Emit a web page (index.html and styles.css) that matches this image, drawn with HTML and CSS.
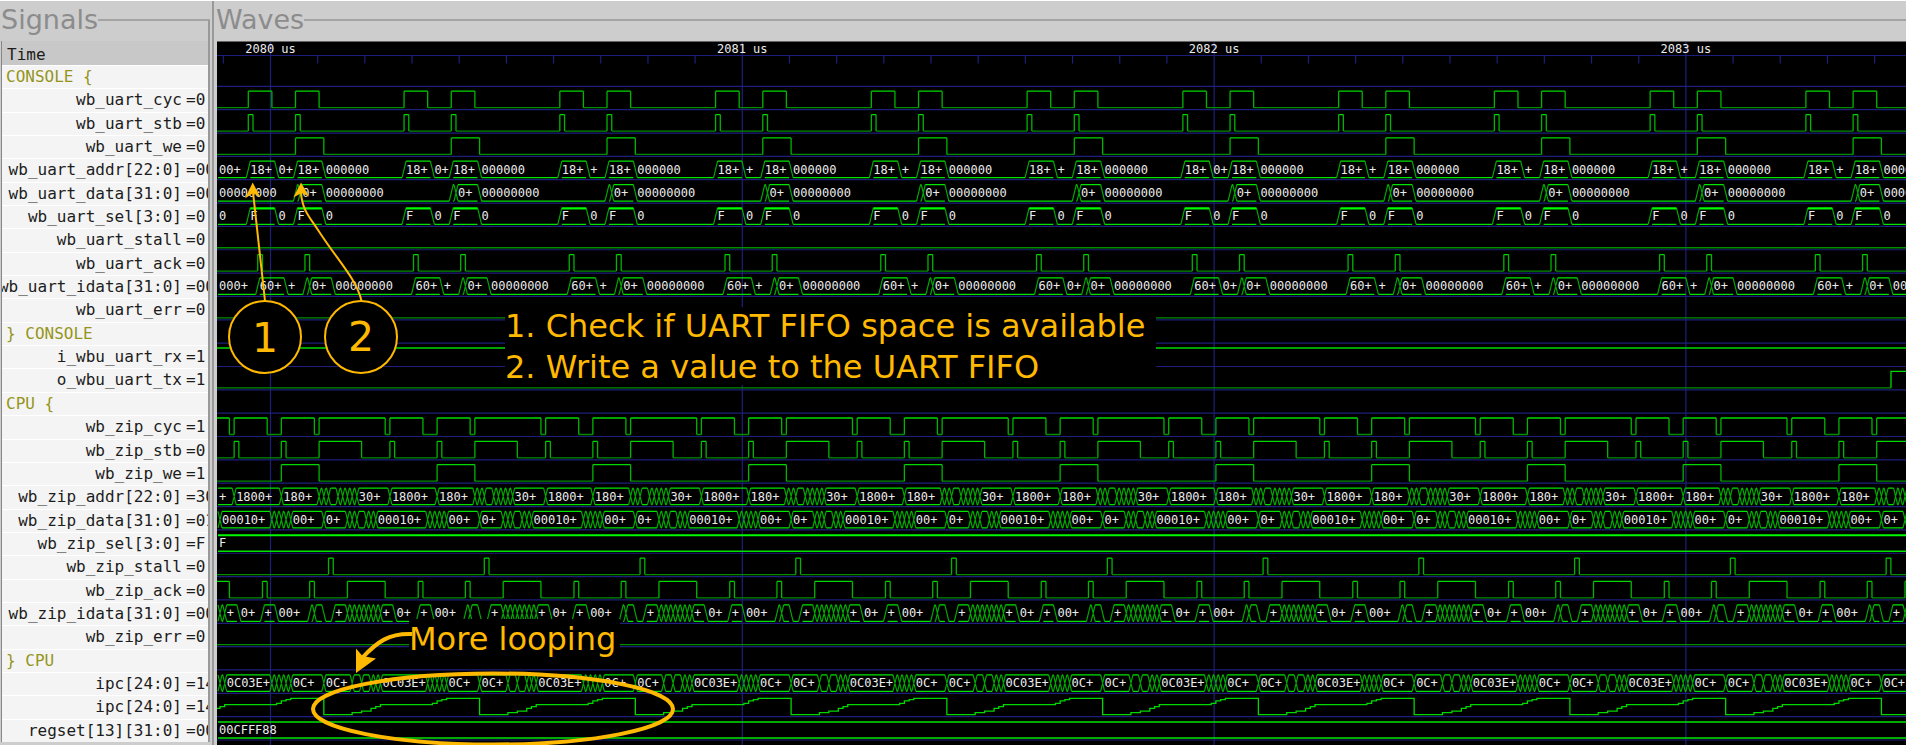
FILE: index.html
```html
<!DOCTYPE html>
<html lang="en">
<head>
<meta charset="utf-8">
<title>Waveform viewer</title>
<link rel="stylesheet" href="styles.css">
</head>
<body>
<main class="viewer">
  <section class="signals">
    <header class="panel-head">
      <h2 class="panel-title">Signals</h2>
      <span class="panel-rule panel-rule-corner"></span>
    </header>
    <div class="signals-body">
      <div class="time-head">Time</div>
      <ul class="signal-list" id="signals"></ul>
    </div>
  </section>
  <div class="divider"></div>
  <section class="waves">
    <header class="panel-head">
      <h2 class="panel-title">Waves</h2>
      <span class="panel-rule"></span>
    </header>
    <div class="canvas">
      <svg class="plot" id="plot" role="img" aria-label="Waveforms of the UART console and the CPU bus"></svg>
    </div>
  </section>
</main>
<script src="waves.js"></script>
</body>
</html>
```

FILE: styles.css
```css
* { box-sizing: border-box; }

body {
  margin: 0;
  background: #fff;
  font-family: "DejaVu Sans", sans-serif;
}

.viewer {
  display: flex;
  min-height: 100vh;
  padding: 1px 1px 3px 0;
}

.signals,
.waves {
  display: flex;
  flex-direction: column;
  background: #cdcdcd;
}

.signals {
  flex: 0 0 212px;
  padding: 0 2px 0 1px;
}

.waves {
  flex: 1;
  min-width: 0;
}

.divider {
  flex: 0 0 4px;
  background: #cdcdcd;
  border-left: 2px solid #999;
}

.panel-head {
  display: flex;
  height: 40px;
}

.panel-title {
  margin: 0;
  font-size: 27px;
  font-weight: 400;
  line-height: 38px;
  color: #8c8c8c;
}

.panel-rule {
  flex: 1;
  margin-top: 18px;
  border-top: 2px solid #a4a4a4;
}

.panel-rule-corner { border-right: 2px solid #999; }

.signals-body {
  flex: 1;
  display: flex;
  flex-direction: column;
  margin-bottom: 3px;
  border-left: 1px solid #888;
  border-right: 2px solid #999;
  font-family: "DejaVu Sans Mono", monospace;
  font-size: 16px;
  color: #1c1c1c;
}

.time-head {
  height: 24px;
  padding: 0 5px;
  line-height: 28px;
  background: #c8c8c8;
}

.signal-list {
  flex: 1;
  display: grid;
  grid-auto-rows: 1fr;
  margin: 0;
  padding: 0;
  list-style: none;
}

.signal {
  display: flex;
  justify-content: flex-end;
  overflow: hidden;
  background: #f4f4f4;
  border-top: 1px solid #fff;
  line-height: 22px;
  white-space: pre;
}

.signal-name {
  flex: 0 0 auto;
  padding-right: 4px;
}

.signal-value {
  flex: 0 0 22px;
  overflow: hidden;
}

.signal-group {
  justify-content: flex-start;
  padding-left: 4px;
  color: #94941c;
}

.canvas {
  flex: 1;
  position: relative;
  margin-left: 1px;
  border-top: 1px solid #666;
  background: #000;
}

.plot {
  position: absolute;
  inset: 0;
  width: 100%;
  height: 100%;
}

.grid { stroke: #1e1e7c; stroke-width: 1.2; fill: none; }
.lo { stroke: #008c00; stroke-width: 1.3; fill: none; }
.hi { stroke: #00d800; stroke-width: 1.3; fill: none; }
.edge { stroke: #00b400; stroke-width: 1.3; fill: none; }
.cross { stroke: #00a800; stroke-width: 1.2; fill: none; }
.rail { stroke: #00e400; stroke-width: 1.3; fill: none; }
.thick { stroke: #00fa00; stroke-width: 2.2; fill: none; }

.val {
  font-family: "DejaVu Sans Mono", monospace;
  font-size: 12px;
  fill: #ececec;
}

.tick-label { text-anchor: middle; }

.note {
  font-family: "DejaVu Sans", sans-serif;
  font-size: 32px;
  fill: #ffb900;
}

.note-number {
  font-size: 41px;
  text-anchor: middle;
}

.note-box { fill: #000; }
.note-circle { fill: #000; stroke: #ffb900; stroke-width: 2; }
.note-line { fill: none; stroke: #ffb900; stroke-width: 2; }
.note-bold { fill: none; stroke: #ffb900; stroke-width: 4; }
.note-head { fill: #ffb900; }
```

FILE: waves.js
```js
// One bus cycle of the loop lasts 33 clocks; every list below is in clocks.
const LOOP = 33;
const CLOCK = 4.72;
const ORIGIN = 31.3;
const MICROSECOND = 471.8;
const FIRST_MARK = 53.5;

const uartLabel = (wide, wideLoops) => k => wideLoops.includes(k) ? wide : '+';

const signals = [
  { group: 'CONSOLE {' },
  { name: 'wb_uart_cyc', value: '0', bits: [[0, 5], [10, 15]] },
  { name: 'wb_uart_stb', value: '0', bits: [[0, 1], [10, 11]] },
  { name: 'wb_uart_we', value: '0', bits: [[10, 16]] },
  { name: 'wb_uart_addr[22:0]', value: '00', first: '00+',
    bus: [[0, '18+', 1], [6, uartLabel('0+', [0, 1, 6]), 0], [10, '18+', 1], [16, '000000', 0]] },
  { name: 'wb_uart_data[31:0]', value: '00',
    bus: [[10, '', 1], [11, '0+', 1], [16, '00000000', 0]] },
  { name: 'wb_uart_sel[3:0]', value: '0',
    bus: [[0, 'F', 2], [6, '0', 0], [10, 'F', 2], [16, '0', 0]] },
  { name: 'wb_uart_stall', value: '0', bits: [] },
  { name: 'wb_uart_ack', value: '0', bits: [[2, 3], [12, 13]] },
  { name: 'wb_uart_idata[31:0]', value: '00', first: '000+',
    bus: [[2, '60+', 1], [8, uartLabel('0+', [5, 6]), 0], [12, '', 1], [13, '0+', 1], [18, '00000000', 0]] },
  { name: 'wb_uart_err', value: '0', bits: [] },
  { group: '} CONSOLE' },
  { name: 'i_wbu_uart_rx', value: '1', level: 1 },
  { name: 'o_wbu_uart_tx', value: '1', rise: 1674 },
  { group: 'CPU {' },
  { name: 'wb_zip_cyc', value: '1', bits: [[-3, 4], [7, 14], [15, 29]] },
  { name: 'wb_zip_stb', value: '0', bits: [[-3, -2], [7, 8], [15, 24]] },
  { name: 'wb_zip_we', value: '1', bits: [[7, 15]] },
  { name: 'wb_zip_addr[22:0]', value: '30', first: '+',
    bus: [[-3, '1800+', 1], [7, '180+', 1], [15, '', 1], [16, '', 1], [17, '', 1], [19, '', 1],
      [20, '', 1], [21, '', 1], [22, '', 1], [23, '30+', 1]] },
  { name: 'wb_zip_data[31:0]', value: '01',
    bus: [[-6, '00010+', 1], [5, '', 1], [6, '', 1], [7, '', 1], [8, '', 1], [9, '00+', 1], [16, '0+', 1],
      [21, '', 1], [22, '', 1], [23, '', 1], [25, '', 1], [26, '', 1]] },
  { name: 'wb_zip_sel[3:0]', value: 'F', constant: 'F', top: 'thick' },
  { name: 'wb_zip_stall', value: '0', bits: [[17, 18]] },
  { name: 'wb_zip_ack', value: '0', bits: [[3, 4], [13, 14], [21, 29]] },
  { name: 'wb_zip_idata[31:0]', value: '00',
    bus: [[-5, '+', 1], [-2, '0+', 0], [3, '+', 1], [6, '00+', 0], [13, '', 1], [14, '', 1], [16, '', 0],
      [18, '+', 1], [21, '', 1], [22, '', 1], [23, '', 1], [24, '', 1], [25, '', 1], [26, '', 1], [27, '', 1]] },
  { name: 'wb_zip_err', value: '0', bits: [] },
  { group: '} CPU' },
  { name: 'ipc[24:0]', value: '14',
    bus: [[-5, '0C03E+', 1], [5, '', 1], [6, '', 1], [7, '', 1], [8, '', 1], [9, '0C+', 1], [16, '0C+', 1],
      [22, '', 1], [24, '', 1], [26, '', 1], [27, '', 1]] },
  { name: 'ipc[24:0]', value: '14',
    steps: [[-11, 2], [-9, 3.5], [-7, 6.3], [-6, 8], [-5, 10], [6, 11.3], [7, 13.8], [8, 15], [9, 16.3], [16, 0]] },
  { name: 'regset[13][31:0]', value: '00', constant: '00CFFF88', top: 'rail' }
];

const list = document.getElementById('signals');
const plot = document.getElementById('plot');

list.innerHTML = signals.map(s => s.group
  ? `<li class="signal signal-group">${s.group}</li>`
  : `<li class="signal"><span class="signal-name">${s.name}</span><span class="signal-value">=${s.value}</span></li>`
).join('');

const at = (k, clock) => ORIGIN + (k * LOOP + clock) * CLOCK;
const path = (cls, d) => d ? `<path class="${cls}" d="${d}"/>` : '';
const text = (cls, x, y, s) => `<text class="${cls}" x="${x}" y="${y}">${s}</text>`;

function drawGrid(width, height, lines) {
  let rows = `M0 13.5H${width}`;
  let out = '';
  for (const y of lines) rows += `M0 ${y}H${width}`;
  for (let i = -1; FIRST_MARK + i * MICROSECOND / 10 < width; i++) {
    const x = FIRST_MARK + i * MICROSECOND / 10;
    rows += i % 10 ? `M${x} 13.5v8` : `M${x} 0V${height}`;
  }
  out += path('grid', rows);
  for (let i = 0; FIRST_MARK + i * MICROSECOND < width; i++) {
    out += text('val tick-label', FIRST_MARK + i * MICROSECOND, 11, `${2080 + i} us`);
  }
  return out;
}

function drawBits(s, hi, lo, width, loops) {
  let x = 0, low = '', high = '', edge = '';
  for (let k = -1; k < loops; k++) {
    for (const [a, b] of s.bits) {
      const x1 = at(k, a), x2 = at(k, b);
      if (x2 < 0) continue;
      if (x1 > x) low += `M${x} ${lo}H${x1}`;
      high += `M${Math.max(x1, 0)} ${hi}H${x2}`;
      edge += `M${x1} ${lo}V${hi}M${x2} ${lo}V${hi}`;
      x = x2;
    }
  }
  if (x < width) low += `M${x} ${lo}H${width}`;
  return path('lo', low) + path('edge', edge) + path('hi', high);
}

function drawBus(s, hi, lo, width, loops) {
  const slant = 2;
  const cells = [];
  for (let k = -1; k < loops; k++) {
    for (const [clock, label, kind] of s.bus) {
      cells.push({ x: at(k, clock), label: typeof label === 'function' ? label(k) : label, kind });
    }
  }
  let rail = '', cross = '', thick = '', labels = '';
  for (let i = 0; i < cells.length - 1; i++) {
    const c = cells[i], end = cells[i + 1].x;
    if (end < 0 || c.x > width) continue;
    const left = Math.max(c.x + slant, 1), right = end - slant;
    rail += `M${left} ${lo}H${right}`;
    if (c.kind === 1) rail += `M${left} ${hi}H${right}`;
    if (c.kind === 2) thick += `M${left} ${hi + 0.5}H${right}`;
    if (cells[i + 1].kind) cross += `M${right} ${lo}L${end + slant} ${hi}`;
    if (c.kind) cross += `M${right} ${hi}L${end + slant} ${lo}`;
    if (c.label) {
      labels += text('val', Math.max(c.x, 0) + 2, lo - 4, c.x < 0 && s.first ? s.first : c.label);
    }
  }
  return path('cross', cross) + path('rail', rail) + path('thick', thick) + labels;
}

function drawSteps(s, lo, loops) {
  let d = `M0 ${lo - 6.3}`;
  for (let k = 0; k < loops; k++) {
    for (const [clock, level] of s.steps) {
      const x = at(k, clock);
      if (x > 0) d += `H${x}V${lo - level}`;
    }
  }
  return path('hi', d);
}

function drawNotes() {
  return `
    <rect class="note-box" x="288" y="265" width="651" height="78"/>
    <text class="note" x="288" y="295">1. Check if UART FIFO space is available</text>
    <text class="note" x="288" y="336">2. Write a value to the UART FIFO</text>
    <path class="note-line" d="M48 259L36 150"/>
    <path class="note-head" d="M35.7 140.5L43.5 155.5L36.3 151L28 156.5Z"/>
    <path class="note-line" d="M144.5 259C140 238 122 220 103 191C92 174 85 168 84 150"/>
    <path class="note-head" d="M84 140.5L92 154.5L84.5 151L76.3 155.5Z"/>
    <circle class="note-circle" cx="48" cy="295" r="36"/>
    <circle class="note-circle" cx="144" cy="295" r="36"/>
    <text class="note note-number" x="48" y="310">1</text>
    <text class="note note-number" x="144" y="309">2</text>
    <rect class="note-box" x="192" y="577" width="211" height="46"/>
    <text class="note" x="192" y="608">More looping</text>
    <path class="note-bold" d="M195 592C172 591 160 600 145 616"/>
    <path class="note-head" d="M139 631V606.5L145.5 614L159 616.5Z"/>
    <ellipse class="note-bold" cx="276" cy="667" rx="180" ry="35.5"/>`;
}

function draw() {
  const width = plot.clientWidth, height = plot.clientHeight;
  const rowHeight = list.getBoundingClientRect().height / signals.length;
  const loops = Math.ceil(width / (LOOP * CLOCK)) + 1;
  const lines = signals.map((s, i) => 21 + rowHeight * (i + 1));
  let out = drawGrid(width, height, lines);
  signals.forEach((s, i) => {
    const lo = lines[i] - 2, hi = lines[i] - 18.5;
    if (s.bits) out += drawBits(s, hi, lo, width, loops);
    if (s.bus) out += drawBus(s, hi, lo, width, loops);
    if (s.steps) out += drawSteps(s, lo, loops);
    if (s.level) out += path('hi', `M0 ${hi}H${width}`);
    if (s.rise) out += path('lo', `M0 ${lo}H${s.rise}`) + path('hi', `M${s.rise} ${lo}V${hi}H${width}`);
    if (s.constant) {
      out += path('rail', `M1 ${lo}H${width}`) + path(s.top, `M1 ${hi + 0.5}H${width}`)
        + text('val', 2, lo - 4, s.constant);
    }
  });
  plot.innerHTML = out + drawNotes();
}

draw();
window.addEventListener('resize', draw);
```
